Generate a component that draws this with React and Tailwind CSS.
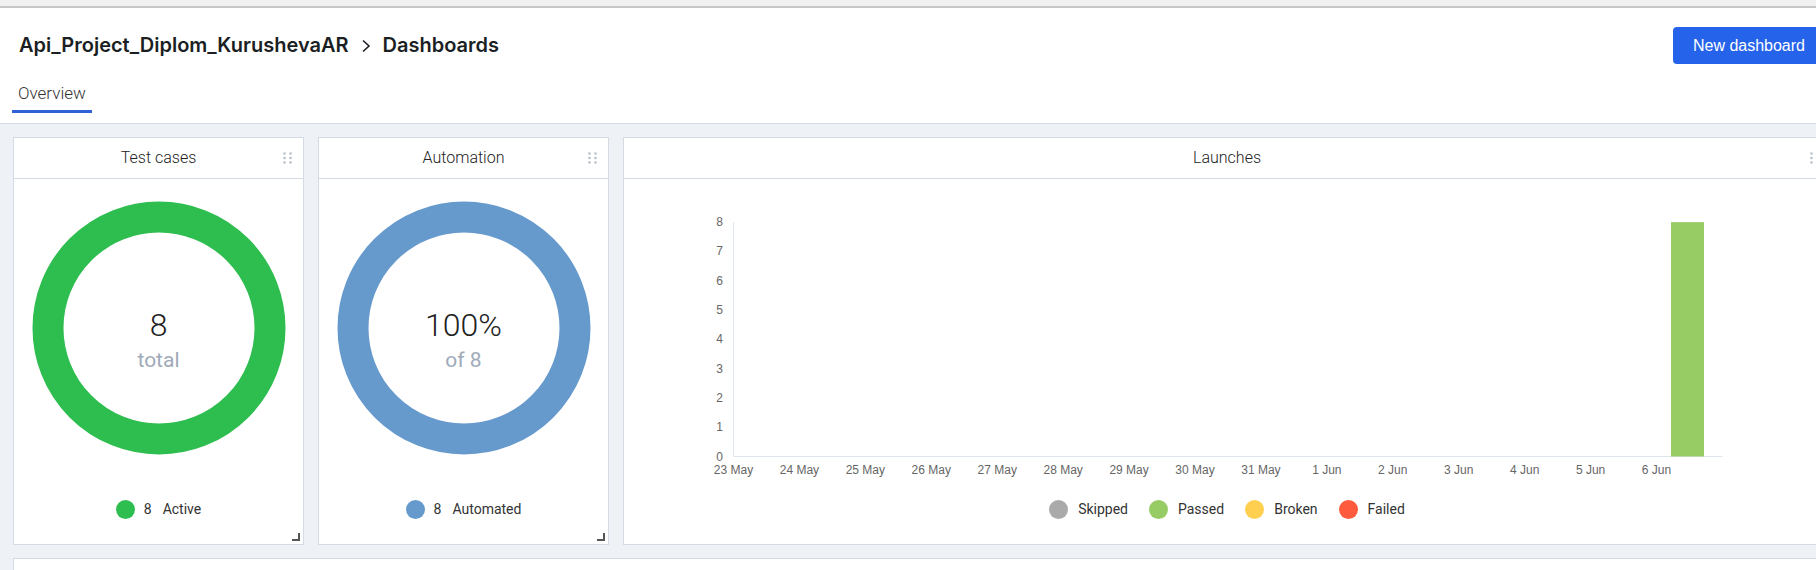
import React from "react";

const days = [
  "23 May", "24 May", "25 May", "26 May", "27 May", "28 May", "29 May", "30 May",
  "31 May", "1 Jun", "2 Jun", "3 Jun", "4 Jun", "5 Jun", "6 Jun",
];

const statuses = [
  { name: "Skipped", color: "#aaaaaa" },
  { name: "Passed", color: "#97cc64" },
  { name: "Broken", color: "#ffd050" },
  { name: "Failed", color: "#fd5a3e" },
];

const DragDots = ({ className }) => (
  <svg width="9" height="12" viewBox="0 0 9 12" className={className}>
    {[0, 1].map((c) =>
      [0, 1, 2].map((r) => (
        <circle key={`${c}-${r}`} cx={1.5 + c * 6} cy={1.5 + r * 4.5} r="1.3" fill="#b9c0ca" />
      ))
    )}
  </svg>
);

const ResizeCorner = () => (
  <svg width="8" height="8" viewBox="0 0 8 8" className="absolute right-[3px] bottom-[3px]">
    <path d="M7 0 V7 H0" stroke="#555" strokeWidth="2" fill="none" />
  </svg>
);

const Card = ({ title, children, className = "" }) => (
  <div className={`relative bg-white border border-[#d5dbe4] h-[408px] ${className}`}>
    <div className="relative h-[41px] border-b border-[#d5dbe4] flex items-center justify-center">
      <span className="text-[16px] font-light text-[#222]">{title}</span>
      <DragDots className="absolute right-[11px] top-[14px]" />
    </div>
    {children}
  </div>
);

const Donut = ({ color, value, label, legendValue, legendLabel }) => (
  <div className="flex flex-col items-center pt-[22px]">
    <div className="relative w-[254px] h-[254px]">
      <svg width="254" height="254" viewBox="0 0 254 254">
        <circle cx="127" cy="127" r="111" stroke={color} strokeWidth="31" fill="none" />
      </svg>
      <div className="absolute inset-0 flex flex-col items-center justify-center pt-[24px]">
        <div className="text-[32px] leading-[36px] font-light text-[#222]">{value}</div>
        <div className="text-[21px] leading-[26px] mt-[4px] text-[#a0aab9]">{label}</div>
      </div>
    </div>
    <div className="mt-[45px] h-[19px] flex items-center text-[14px] text-[#333]">
      <span className="w-[19px] h-[19px] rounded-full" style={{ backgroundColor: color }} />
      <span className="ml-[9px]">{legendValue}</span>
      <span className="ml-[11px]">{legendLabel}</span>
    </div>
  </div>
);

const LaunchesChart = () => {
  const x0 = 109.5;
  const step = 65.93;
  const y0 = 277.5;
  const unit = 29.3;
  return (
    <svg width="1206" height="321" viewBox="0 0 1206 321" className="block">
      <line x1={x0} y1={y0 - 8 * unit} x2={x0} y2={y0} stroke="#dfe5ec" strokeWidth="1" />
      <line x1={x0} y1={y0} x2={x0 + step * 15} y2={y0} stroke="#dfe5ec" strokeWidth="1" />
      {[0, 1, 2, 3, 4, 5, 6, 7, 8].map((v) => (
        <text
          key={v}
          x="99"
          y={y0 - v * unit + 4}
          textAnchor="end"
          fontSize="12"
          fill="#666"
          fontFamily="'Liberation Sans', Arial, sans-serif"
        >
          {v}
        </text>
      ))}
      {days.map((d, i) => (
        <text
          key={d}
          x={x0 + i * step}
          y="295"
          textAnchor="middle"
          fontSize="12"
          fill="#666"
          fontFamily="'Liberation Sans', Arial, sans-serif"
        >
          {d}
        </text>
      ))}
      <rect x="1047" y={y0 - 8 * unit} width="33" height={8 * unit} fill="#97cc64" />
    </svg>
  );
};

const App = () => {
  return (
    <div className="w-[1816px] h-[570px] overflow-hidden bg-[#eef2f7] font-['Roboto',sans-serif]">
      <div className="w-[1844px]">
        <div className="h-[8px] bg-[#f1f1f1] border-b-2 border-[#c8c8c8]" />

        <header className="h-[116px] bg-white border-b border-[#d5dce6]">
          <div className="flex items-center justify-between pl-[19px] pr-[19px] pt-[19px]">
            <div className="flex items-center text-[20px] font-semibold text-[#1b1f24] font-['Inter',sans-serif] leading-[37px]">
              <span>Api_Project_Diplom_KurushevaAR</span>
              <svg width="10" height="14" viewBox="0 0 10 14" className="mx-[12px]">
                <path d="M2 1.5 L8 7 L2 12.5" stroke="#1b1f24" strokeWidth="1.6" fill="none" />
              </svg>
              <span>Dashboards</span>
            </div>
            <button className="h-[37px] px-[20px] rounded-[4px] bg-[#2563eb] text-white text-[16px] font-['Liberation_Sans',Arial,sans-serif]">
              New dashboard
            </button>
          </div>
          <div className="mt-[19px] ml-[12px] inline-block px-[6px] pb-[7px] border-b-[3px] border-[#2f62d6]">
            <span className="block text-[17px] leading-[20px] font-light text-[#333]">Overview</span>
          </div>
        </header>

        <main className="px-[13px] pt-[13px]">
          <div className="grid grid-cols-[291px_291px_1fr] gap-[14px]">
            <Card title="Test cases">
              <Donut color="#2ebd4f" value="8" label="total" legendValue="8" legendLabel="Active" />
              <ResizeCorner />
            </Card>
            <Card title="Automation">
              <Donut color="#6699cc" value="100%" label="of 8" legendValue="8" legendLabel="Automated" />
              <ResizeCorner />
            </Card>
            <Card title="Launches">
              <LaunchesChart />
              <div className="h-[19px] flex items-center justify-center gap-[21px] text-[14px] text-[#333]">
                {statuses.map((s) => (
                  <div key={s.name} className="flex items-center">
                    <span className="w-[19px] h-[19px] rounded-full" style={{ backgroundColor: s.color }} />
                    <span className="ml-[10px]">{s.name}</span>
                  </div>
                ))}
              </div>
            </Card>
          </div>
          <div className="mt-[13px] h-[200px] bg-white border border-[#d5dbe4]" />
        </main>
      </div>
    </div>
  );
};

export default App;
